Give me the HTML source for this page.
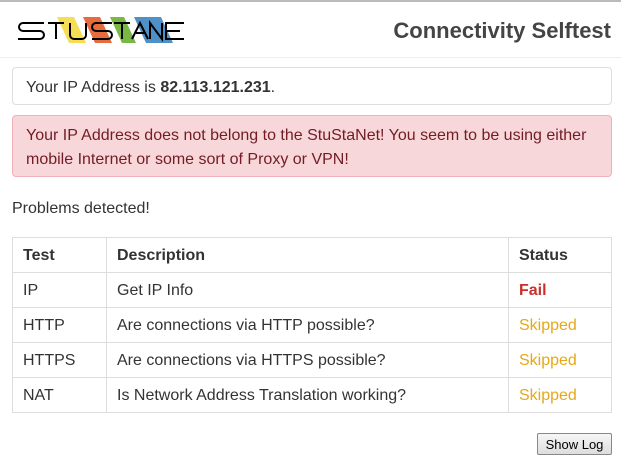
<!DOCTYPE html>
<html><head><style>
body{margin:0;width:621px;height:463px;background:#fff;font-family:"Liberation Sans",sans-serif;color:#333;position:relative;overflow:hidden}
.top{position:absolute;left:0;top:0;width:621px;height:2px;background:#bbb}
.hdr{position:absolute;left:0;top:2px;width:621px;height:55px;border-bottom:1px solid #eee}
h1{position:absolute;right:10px;top:16px;margin:0;font-size:22px;font-weight:bold;color:#444}
.box{position:absolute;left:12px;width:597px;border:1px solid #ddd;border-radius:4px;font-size:16px}
.ip{top:67px;height:38px;line-height:39px;padding-left:13px;box-sizing:border-box;width:600px}
.al{top:115px;height:62px;box-sizing:border-box;width:600px;background:#f8d7da;border-color:#f1b0b7;color:#721c24;padding:8px 13px;line-height:24px}
.pd{position:absolute;left:12px;top:200px;font-size:16px}
table{position:absolute;left:12px;top:237px;width:600px;border-collapse:collapse;font-size:16px}
td,th{border:1px solid #ddd;height:33px;padding:1px 10px 0;text-align:left;box-sizing:border-box}
tr{height:35px}
th{font-weight:bold}
.f{color:#c9302c;font-weight:bold}.s{color:#e6a817}
button{position:absolute;left:537px;top:433px;width:75px;height:22px;font-family:"Liberation Sans",sans-serif;font-size:13px;border:1px solid #888;border-radius:2px;background:linear-gradient(#f6f6f6,#ddd);padding:0}
</style></head><body>
<div class="top"></div>
<div class="hdr">
<svg width="200" height="55" style="position:absolute;left:0;top:0" viewBox="0 2 200 55">
<polygon points="57,17 74,17 86,43 69,43" fill="#f7dc55"/>
<polygon points="83,17 100,17 112,43 95,43" fill="#e66c3e"/>
<polygon points="110,17 124,17 136,43 122,43" fill="#7bb843"/>
<polygon points="134,17 161,17 173,43 146,43" fill="#4f90c6"/>
<g fill="none" stroke="#000" stroke-width="2">
<path d="M44,23H23a4,4 0 0 0 0,8H40a4,4 0 0 1 0,8H18"/>
<path d="M48,23H64M56,23V39"/>
<path d="M70,23V35a4,4 0 0 0 4,4H82a4,4 0 0 0 4,-4V23"/>
<path d="M112,23H96a4,4 0 0 0 0,8H108a4,4 0 0 1 0,8H92"/>
<path d="M114,23H130M122,23V39"/>
<path d="M132,39L140,23L148,39M136,33H144"/>
<path d="M150,39V23L162,39V23"/>
<path d="M184,23H166V39H184M166,31H180"/>
</g>
</svg>
<h1>Connectivity Selftest</h1>
</div>
<div class="box ip">Your IP Address is <b>82.113.121.231</b>.</div>
<div class="box al">Your IP Address does not belong to the StuStaNet! You seem to be using either mobile Internet or some sort of Proxy or VPN!</div>
<div class="pd">Problems detected!</div>
<table>
<tr><th style="width:94px">Test</th><th>Description</th><th style="width:103px">Status</th></tr>
<tr><td>IP</td><td>Get IP Info</td><td class="f">Fail</td></tr>
<tr><td>HTTP</td><td>Are connections via HTTP possible?</td><td class="s">Skipped</td></tr>
<tr><td>HTTPS</td><td>Are connections via HTTPS possible?</td><td class="s">Skipped</td></tr>
<tr><td>NAT</td><td>Is Network Address Translation working?</td><td class="s">Skipped</td></tr>
</table>
<button>Show Log</button>
</body></html>
